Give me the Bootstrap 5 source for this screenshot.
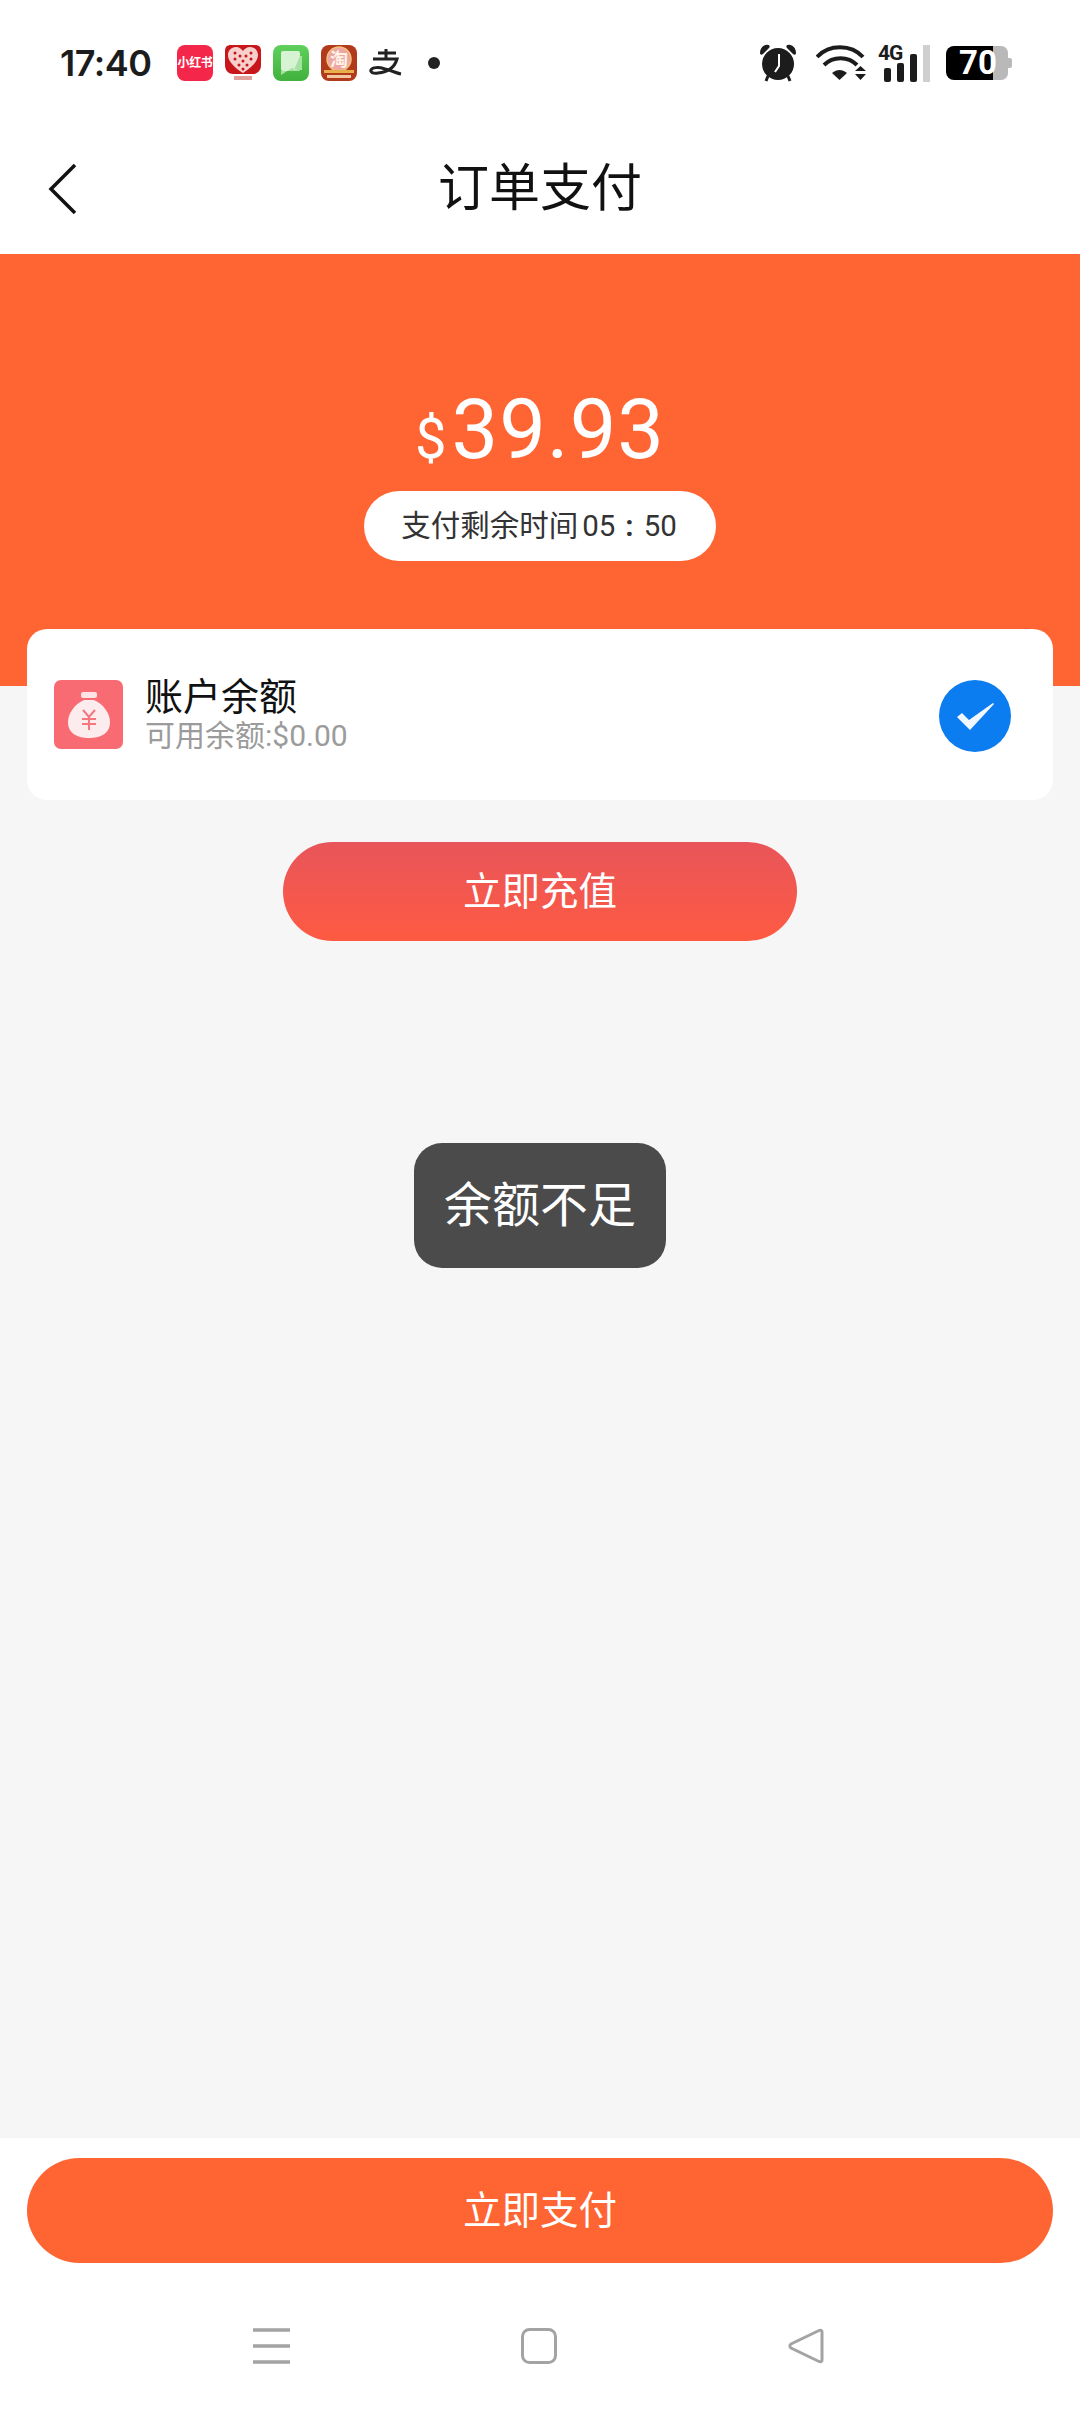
<!DOCTYPE html>
<html lang="zh">
<head>
    <meta charset="utf-8">
    <title>订单支付</title>
    <link href="https://cdn.jsdelivr.net/npm/bootstrap@5.3.0/dist/css/bootstrap.min.css" rel="stylesheet">
    <style>
        body { font-family: "Roboto", "Noto Sans CJK SC", sans-serif; background: #f6f6f6; }
        .screen { width: 1080px; height: 2412px; position: relative; overflow: hidden; }
        .status-row { height: 126px; padding: 0 68px 0 60px; }
        .clock { font-family: "Inter", sans-serif; font-size: 36px; font-weight: 600; color: #1c1c1c; width: 90px; letter-spacing: -.5px; margin-right: 27px; }
        .app-icons { gap: 12px; }
        .app-icons svg { display: block; }
        .red-book { width: 36px; height: 36px; border-radius: 8px; background: #f4274a; color: #fff; font-size: 12px; font-weight: 700; line-height: 36px; text-align: center; white-space: nowrap; letter-spacing: -.3px; }
        .pay-dot { width: 12px; height: 12px; border-radius: 50%; background: #222; margin-left: 13px; }
        .signal-box { width: 52px; height: 37px; position: relative; margin: 0 16px 0 12px; }
        .signal-box svg { display: block; }
        .signal-label { left: 0; top: 0; font-size: 21px; line-height: 17px; font-weight: 700; color: #1c1c1c; letter-spacing: -1px; }
        .batt-body { width: 47px; height: 34px; background: #000; border-radius: 8px 0 0 8px; color: #fff; font-weight: 700; font-size: 33px; line-height: 34px; padding-left: 13px; white-space: nowrap; position: relative; z-index: 1; }
        .top-nav { height: 128px; }
        .back-link { left: 48px; top: 163px; line-height: 0; }
        .page-title { font-size: 51px; color: #111; font-weight: 400; line-height: 1; }
        .hero { height: 432px; background: #ff6433; padding-top: 122px; color: #fff; }
        .amount-row { height: 115px; line-height: 108px; font-size: 83px; margin-bottom: 0; letter-spacing: 1px; }
        .amount-row span { font-size: 56px; letter-spacing: 0; margin-right: 5px; }
        .time-pill { width: 352px; height: 70px; background: #fff; color: #333; font-size: 29.5px; padding-right: 2px; }
        .time-pill i { font-style: normal; margin-left: 4px; }
        .time-pill b { font-weight: 700; padding: 0 10px; }
        .pay-card { margin: -57px 27px 0; height: 171px; border: 0; border-radius: 20px; padding: 51px 42px 0 27px; }
        .bag-box { width: 69px; height: 69px; background: #f96b72; border-radius: 7px; margin-right: 22px; }
        .card-name { font-size: 38px; line-height: 42px; color: #111; margin-top: -4px; }
        .card-sub { font-size: 30px; line-height: 36px; color: #9b9b9b; }
        .check-dot { width: 72px; height: 72px; border-radius: 50%; background: #0b7df1; }
        .recharge { width: 514px; height: 99px; margin-top: 42px; font-size: 38.5px; color: #fff; border: 0; background: linear-gradient(#e8555a, #fe5a42); }
        .toast-box { left: 414px; top: 1143px; width: 252px; height: 125px; background: #4b4b4b; border-radius: 28px; color: #fff; font-size: 48px; }
        .bottom-area { height: 274px; background: #fff; padding: 20px 27px 0; }
        .pay-btn { height: 105px; background: #ff6433; border: 0; color: #fff; font-size: 38.5px; }
        .sys-nav { height: 149px; position: relative; }
        .sys-nav svg { position: absolute; top: 65px; }
        .alarm-icon { margin-right: 20px; }
    </style>
</head>
<body>
    <div class="screen d-flex flex-column">
        <div class="bg-white">
            <div class="status-row d-flex align-items-center justify-content-between">
                <div class="d-flex align-items-center">
                    <div class="clock">17:40</div>
                    <div class="app-icons d-flex align-items-center">
                        <div class="red-book">小红书</div>
                        <svg width="36" height="36" viewBox="0 0 36 36">
                            <path d="M6 0h24c4 0 6 2 6 6v14c0 6-4 9-8 9H8c-4 0-8-3-8-9V6c0-4 2-6 6-6z" fill="#c8161d"/>
                            <path d="M18 28C7 21 3 15 3 10c0-4 3-8 8-8 3 0 5.500 2 7 4 1.500-2 4-4 7-4 5 0 8 4 8 8 0 5-4 11-15 18z" fill="#f8d0cb"/>
                            <g fill="#c8161d"><circle cx="10" cy="8" r="1.500"/><circle cx="15" cy="11" r="1.500"/><circle cx="21" cy="11" r="1.500"/><circle cx="26" cy="8" r="1.500"/><circle cx="10" cy="14" r="1.500"/><circle cx="18" cy="16" r="1.500"/><circle cx="26" cy="14" r="1.500"/><circle cx="14" cy="20" r="1.500"/><circle cx="22" cy="20" r="1.500"/><circle cx="18" cy="24" r="1.500"/></g>
                            <rect x="9" y="31" width="18" height="4" fill="#e2a09a"/>
                        </svg>
                        <svg width="36" height="36" viewBox="0 0 36 36">
                            <defs><linearGradient id="msgBg" x1="0" y1="0" x2="0" y2="1"><stop offset="0" stop-color="#5fd05b"/><stop offset="1" stop-color="#3fb13c"/></linearGradient></defs>
                            <rect width="36" height="36" rx="8" fill="url(#msgBg)"/>
                            <rect x="8" y="6" width="19" height="20" rx="2" fill="#d6f3d3"/>
                            <path d="M27 11h2v14h-8zM8 26h19l-8-3-11 7z" fill="#a5e2a1"/>
                        </svg>
                        <svg width="36" height="36" viewBox="0 0 36 36">
                            <rect width="36" height="36" rx="8" fill="#b23a1c"/>
                            <circle cx="18" cy="14" r="12" fill="#eda7a3" stroke="#f2c27a" stroke-width="1.500"/>
                            <text x="9" y="21" font-family="Noto Sans CJK SC" font-weight="700" font-size="18" fill="#fff3e6">淘</text>
                            <rect x="3" y="25" width="30" height="3" fill="#e8b04a"/>
                            <rect x="6" y="30" width="24" height="3" fill="#f3c7a0"/>
                        </svg>
                        <svg width="34" height="28" viewBox="0 0 34 28">
                            <path d="M9 4h18M17 0v9M4 10h24C26 17 20 23 9 24c-5 1-8-1-7-3 1-3 8-3 14-1 5 1 11 4 16 5" fill="none" stroke="#222" stroke-width="3"/>
                        </svg>
                        <div class="pay-dot"></div>
                    </div>
                </div>
                <div class="d-flex align-items-center">
                    <svg class="alarm-icon" width="36" height="38" viewBox="0 0 36 38">
                        <path d="M0 9c0-5 4-9 8-8 2 0 2 2 1 3L3 10c-1 1-3 1-3-1zM36 9c0-5-4-9-8-8-2 0-2 2-1 3l6 6c1 1 3 1 3-1z" fill="#1c1c1c"/>
                        <path d="M8 32l-2 5M28 32l2 5" stroke="#1c1c1c" stroke-width="3"/>
                        <circle cx="18" cy="20" r="16" fill="#1c1c1c"/>
                        <path d="M19 10v12l-4 6" fill="none" stroke="#fff" stroke-width="2"/>
                    </svg>
                    <svg width="50" height="36" viewBox="0 0 50 36">
                        <path d="M1 12C13-1 35-1 47 12M8 20c9-9 24-9 33 0" fill="none" stroke="#1c1c1c" stroke-width="4"/>
                        <path d="M16 28c5-4 10-4 15 0l-7.500 7z" fill="#1c1c1c"/>
                        <path d="M39 26l5.500-5 5.500 5zM39 29l5.500 6 5.500-6z" fill="#1c1c1c"/>
                    </svg>
                    <div class="signal-box">
                        <svg width="52" height="37" viewBox="0 0 52 37">
                            <rect x="6" y="23" width="7" height="14" rx="2" fill="#1c1c1c"/>
                            <rect x="19" y="18" width="7" height="19" rx="2" fill="#1c1c1c"/>
                            <rect x="32" y="9" width="7" height="28" rx="2" fill="#1c1c1c"/>
                            <rect x="45" y="0" width="7" height="37" fill="#cfcfcf"/>
                        </svg>
                        <div class="signal-label position-absolute">4G</div>
                    </div>
                    <div class="d-flex align-items-center">
                        <div class="batt-body">70</div>
                        <svg class="d-block" width="19" height="34" viewBox="0 0 19 34"><path d="M0 0h8c4 0 7 3 7 7v5h2c1 0 2 1 2 2v6c0 1-1 2-2 2h-2v5c0 4-3 7-7 7H0z" fill="#b9b9b9"/></svg>
                    </div>
                </div>
            </div>
            <div class="top-nav d-flex align-items-center justify-content-center pb-1">
                <div class="page-title">订单支付</div>
            </div>
        </div>
        <a class="back-link position-absolute" href="#">
            <svg width="30" height="52" viewBox="0 0 30 52"><path d="M27 2L3 26l24 24" fill="none" stroke="#111" stroke-width="3.500"/></svg>
        </a>

        <div class="hero text-center">
            <p class="amount-row"><span>$</span>39.93</p>
            <div class="time-pill rounded-pill d-inline-flex align-items-center justify-content-center">支付剩余时间<i>05</i><b>:</b>50</div>
        </div>

        <div class="pay-card card flex-row align-items-start">
            <div class="bag-box d-flex align-items-center justify-content-center flex-shrink-0">
                <svg width="42" height="46" viewBox="0 0 42 46">
                    <rect x="13" y="0" width="16" height="6" rx="2" fill="#fde3e4"/>
                    <path d="M16 8h10c9 4 16 13 16 22 0 12-10 16-21 16S0 42 0 30C0 21 7 12 16 8z" fill="#fdeced"/>
                    <path d="M15 18l6 7 6-7M14 27h14M14 32h14M21 25v13" fill="none" stroke="#f5777d" stroke-width="2"/>
                </svg>
            </div>
            <div class="flex-grow-1">
                <div class="card-name">账户余额</div>
                <div class="card-sub">可用余额:$0.00</div>
            </div>
            <div class="check-dot d-flex align-items-center justify-content-center">
                <svg width="37" height="27" viewBox="0 0 37 27"><path d="M0 14l5-4 7 7L36 0l1 1-24 26z" fill="#f2f8ff"/></svg>
            </div>
        </div>

        <div class="flex-grow-1 text-center">
            <button class="recharge btn rounded-pill" type="button">立即充值</button>
        </div>

        <div class="toast-box position-absolute d-flex align-items-center justify-content-center">余额不足</div>

        <div class="bottom-area">
            <button class="pay-btn btn rounded-pill w-100" type="button">立即支付</button>
        </div>
        <div class="position-absolute bottom-0 start-0 w-100">
            <div class="sys-nav">
                <svg style="left:253px" width="37" height="36" viewBox="0 0 37 36"><path d="M0 2h37M0 18h37M0 34h37" stroke="#a3a3a3" stroke-width="3.500"/></svg>
                <svg style="left:521px" width="36" height="36" viewBox="0 0 36 36"><rect x="1.500" y="1.500" width="33" height="33" rx="7" fill="none" stroke="#a3a3a3" stroke-width="3"/></svg>
                <svg style="left:788px" width="36" height="36" viewBox="0 0 36 36"><path d="M31 2.500c1.500-.700 3 0 3 1.500v28c0 1.500-1.500 2.200-3 1.500L3 20c-1.500-1-1.500-3 0-4z" fill="none" stroke="#a3a3a3" stroke-width="3"/></svg>
            </div>
        </div>
    </div>
    <script src="https://cdn.jsdelivr.net/npm/bootstrap@5.3.0/dist/js/bootstrap.bundle.min.js"></script>
</body>
</html>
